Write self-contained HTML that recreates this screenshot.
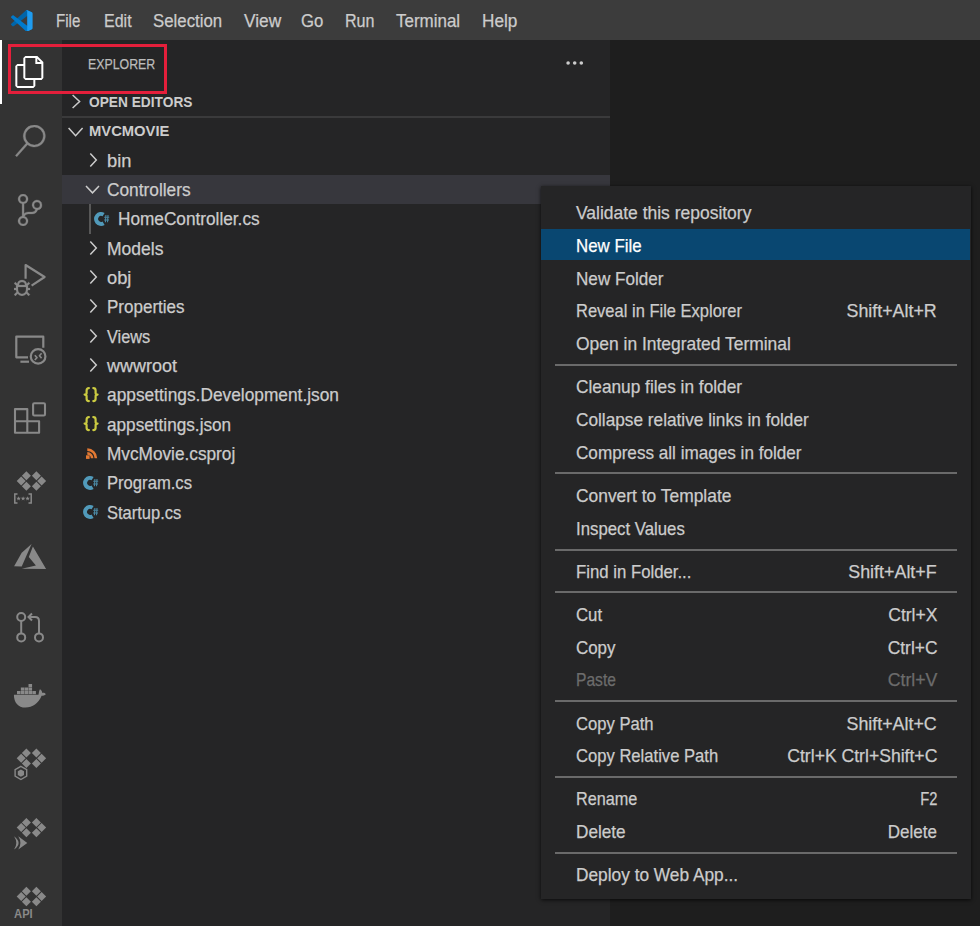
<!DOCTYPE html>
<html><head><meta charset="utf-8"><style>
html,body{margin:0;padding:0;width:980px;height:926px;overflow:hidden;background:#1e1e1e}
body{position:relative;font-family:"Liberation Sans",sans-serif}
.r{position:absolute;box-sizing:content-box}
.t{position:absolute;line-height:20px;white-space:pre}
svg.r{display:block}
</style></head><body>
<div class="r" style="left:0px;top:0px;width:980px;height:40px;background:#3c3c3c;"></div>
<div class="r" style="left:0px;top:40px;width:62px;height:886px;background:#333333;"></div>
<div class="r" style="left:62px;top:40px;width:548px;height:886px;background:#252526;"></div>
<div class="r" style="left:610px;top:40px;width:370px;height:886px;background:#1e1e1e;"></div>
<svg class="r" style="left:11.4px;top:9.5px;" width="21.6" height="21.6" viewBox="0 0 100 100"><path fill="#0065A9" d="M96.46 10.8L75.86.87C73.48-.28 70.63.2 68.76 2.07L1.33 63.55c-1.81 1.66-1.81 4.52.01 6.17l5.51 5.01c1.49 1.35 3.72 1.45 5.32.24L93.4 13.35c2.72-2.07 6.6-.12 6.6 3.3v-.24c0-2.4-1.37-4.59-3.54-5.61z"/>
<path fill="#007ACC" d="M96.46 89.2l-20.6 9.93c-2.38 1.15-5.23.67-7.1-1.2L1.33 36.45c-1.81-1.66-1.81-4.52.01-6.17l5.51-5.01c1.49-1.35 3.72-1.45 5.32-.24L93.4 86.65c2.72 2.07 6.6.12 6.6-3.3v.24c0 2.4-1.37 4.59-3.54 5.61z"/>
<path fill="#1F9CF0" d="M75.86 99.13c-2.38 1.15-5.23.67-7.1-1.2 2.31 2.31 6.24.67 6.24-2.59V4.66c0-3.26-3.93-4.9-6.24-2.59 1.87-1.87 4.72-2.35 7.1-1.2l20.6 9.92c2.17 1.04 3.54 3.23 3.54 5.63v67.17c0 2.4-1.37 4.59-3.54 5.63z"/></svg>
<div class="t" style="left:56.300000000000004px;transform-origin:0 0;top:11.08px;font-size:18.23px;color:#cccccc;font-weight:normal;transform:scaleX(0.8279);-webkit-text-stroke:0.25px #cccccc;">File</div>
<div class="t" style="left:103.5px;transform-origin:0 0;top:11.08px;font-size:18.23px;color:#cccccc;font-weight:normal;transform:scaleX(0.8797);-webkit-text-stroke:0.25px #cccccc;">Edit</div>
<div class="t" style="left:153.2px;transform-origin:0 0;top:11.08px;font-size:18.23px;color:#cccccc;font-weight:normal;transform:scaleX(0.9233);-webkit-text-stroke:0.25px #cccccc;">Selection</div>
<div class="t" style="left:243.7px;transform-origin:0 0;top:11.08px;font-size:18.23px;color:#cccccc;font-weight:normal;transform:scaleX(0.9489);-webkit-text-stroke:0.25px #cccccc;">View</div>
<div class="t" style="left:301.2px;transform-origin:0 0;top:11.08px;font-size:18.23px;color:#cccccc;font-weight:normal;transform:scaleX(0.9174);-webkit-text-stroke:0.25px #cccccc;">Go</div>
<div class="t" style="left:345.3px;transform-origin:0 0;top:11.08px;font-size:18.23px;color:#cccccc;font-weight:normal;transform:scaleX(0.8834);-webkit-text-stroke:0.25px #cccccc;">Run</div>
<div class="t" style="left:396.3px;transform-origin:0 0;top:11.08px;font-size:18.23px;color:#cccccc;font-weight:normal;transform:scaleX(0.9307);-webkit-text-stroke:0.25px #cccccc;">Terminal</div>
<div class="t" style="left:482.3px;transform-origin:0 0;top:11.08px;font-size:18.23px;color:#cccccc;font-weight:normal;transform:scaleX(0.9435);-webkit-text-stroke:0.25px #cccccc;">Help</div>
<div class="r" style="left:0px;top:40px;width:1.5px;height:64px;background:#ffffff;"></div>
<svg class="r" style="left:13.7px;top:55.9px;" width="32" height="32" viewBox="0 0 24 24"><path fill="#ffffff" d="M17.5 0h-9L7 1.5V6H2.5L1 7.5v15.07L2.5 24h12.07L16 22.57V18h4.7l1.3-1.43V4.5L17.5 0zm0 2.12l2.38 2.38H17.5V2.12zm-3 20.38h-12v-15H7v9.07L8.5 18h6v4.5zm6-6h-12v-15H16V6h4.5v10.5z"/></svg>
<svg class="r" style="left:14.2px;top:124.72999999999999px;" width="32" height="32" viewBox="0 0 24 24"><path fill="#898989" stroke="#898989" stroke-width="0.25" d="M15.25 0a8.25 8.25 0 0 0-6.18 13.72L1 22.88l1.12 1 8.05-9.12A8.251 8.251 0 1 0 15.25.01V0zm0 15a6.75 6.75 0 1 1 0-13.5 6.75 6.75 0 0 1 0 13.5z"/></svg>
<svg class="r" style="left:14.3px;top:193.76px;" width="32" height="32" viewBox="0 0 24 24"><path fill="#898989" stroke="#898989" stroke-width="0.2" d="M21.007 8.222A3.738 3.738 0 0 0 15.045 5.2a3.737 3.737 0 0 0 1.156 6.583 2.988 2.988 0 0 1-2.668 1.67h-2.99a4.456 4.456 0 0 0-2.989 1.165V7.4a3.737 3.737 0 1 0-1.494 0v9.117a3.776 3.776 0 1 0 1.816.099 2.99 2.99 0 0 1 2.668-1.667h2.99a4.484 4.484 0 0 0 4.223-3.039 3.736 3.736 0 0 0 3.25-3.687zM4.565 3.738a2.242 2.242 0 1 1 4.484 0 2.242 2.242 0 0 1-4.484 0zm4.484 16.441a2.242 2.242 0 1 1-4.484 0 2.242 2.242 0 0 1 4.484 0zm8.221-9.715a2.242 2.242 0 1 1 0-4.485 2.242 2.242 0 0 1 0 4.485z"/></svg>
<svg class="r" style="left:14px;top:263.89px;" width="32" height="32" viewBox="0 0 24 24"><path fill="#898989" stroke="#898989" stroke-width="0.15" d="M10.94 13.5l-1.32 1.32a3.73 3.73 0 0 0-7.24 0L1.06 13.5 0 14.56l1.72 1.72-.22.22V18H0v1.5h1.5v.08c.077.489.214.966.41 1.42L0 22.94 1.06 24l1.65-1.65A4.308 4.308 0 0 0 6 24a4.31 4.31 0 0 0 3.29-1.65L10.94 24 12 22.94 10.09 21c.198-.464.336-.951.41-1.45v-.1H12V18h-1.5v-1.5l-.22-.22L12 14.56l-1.06-1.06zM6 13.5a2.25 2.25 0 0 1 2.25 2.25h-4.5A2.25 2.25 0 0 1 6 13.5zm3 6a3.33 3.33 0 0 1-3 3 3.33 3.33 0 0 1-3-3v-2.25h6v2.25z"/></svg>
<svg class="r" style="left:0px;top:255px;" width="62" height="40" viewBox="0 255 62 40"><path d="M25.6 278.8 V265 L44.6 277 L31.6 285.6" fill="none" stroke="#898989" stroke-width="2.2" stroke-linejoin="round"/></svg>
<svg class="r" style="left:0px;top:320px;" width="62" height="50" viewBox="0 320 62 50"><g fill="none" stroke="#898989" stroke-width="2.2" stroke-linejoin="round">
<path d="M28 357.3 H16.3 V336.7 H43.3 V347.7"/>
<path d="M20.4 361.7 H29"/>
<circle cx="38.1" cy="356.4" r="7.3"/>
<path d="M34.8 355.2 L37 357.6 L34.8 360" stroke-width="1.6"/>
<path d="M41.6 353.3 L39.4 355.7 L41.6 358.1" stroke-width="1.6"/>
</g></svg>
<svg class="r" style="left:0px;top:395px;" width="62" height="45" viewBox="0 395 62 45"><g fill="none" stroke="#898989" stroke-width="2.1" stroke-linejoin="round">
<path d="M15 409.1 H27.3 V421.3 H39.1 V432.8 H15 Z"/>
<path d="M15 421.3 H27.3 V432.8"/>
<rect x="33.1" y="403.2" width="11.9" height="12.3" rx="1.2"/>
</g></svg>
<svg class="r" style="left:0px;top:460px;" width="62" height="50" viewBox="0 460 62 50"><g fill="#898989"><path d="M26.4 471.3 L30.9 475.8 L26.4 480.3 L21.9 475.8 Z"/><path d="M21.2 476.5 L25.7 481.0 L21.2 485.5 L16.7 481.0 Z"/><path d="M26.4 481.7 L30.9 486.2 L26.4 490.7 L21.9 486.2 Z"/><path d="M36.4 471.3 L40.9 475.8 L36.4 480.3 L31.9 475.8 Z"/><path d="M41.6 476.5 L46.1 481.0 L41.6 485.5 L37.1 481.0 Z"/><path d="M36.4 481.7 L40.9 486.2 L36.4 490.7 L31.9 486.2 Z"/></g><g fill="none" stroke="#898989" stroke-width="1.5"><path d="M17.5 494 H14.8 V503 H17.5"/><path d="M28.5 494 H31.2 V503 H28.5"/></g>
<g fill="#898989"><path d="M18.60 496.20 L19.19 497.79 L20.88 497.86 L19.55 498.91 L20.01 500.54 L18.60 499.60 L17.19 500.54 L17.65 498.91 L16.32 497.86 L18.01 497.79 Z"/><path d="M23.10 496.20 L23.69 497.79 L25.38 497.86 L24.05 498.91 L24.51 500.54 L23.10 499.60 L21.69 500.54 L22.15 498.91 L20.82 497.86 L22.51 497.79 Z"/><path d="M27.60 496.20 L28.19 497.79 L29.88 497.86 L28.55 498.91 L29.01 500.54 L27.60 499.60 L26.19 500.54 L26.65 498.91 L25.32 497.86 L27.01 497.79 Z"/></g></svg>
<svg class="r" style="left:0px;top:535px;" width="62" height="40" viewBox="0 535 62 40"><g fill="#898989"><path d="M14.1 566.3 L21.7 552.7 L31.6 544 L21.7 566.5 Z"/>
<path d="M32.9 546.4 L46.1 568.9 L21.7 568.7 L35.9 565.6 L28.8 557 Z"/></g></svg>
<svg class="r" style="left:0px;top:600px;" width="62" height="50" viewBox="0 600 62 50"><g fill="none" stroke="#898989" stroke-width="2">
<circle cx="21.2" cy="617" r="4"/><circle cx="21.2" cy="637.4" r="4"/><circle cx="39" cy="637.4" r="4"/>
<path d="M21.2 621 V633.4"/>
<path d="M39 633.4 V621 Q39 617 35 617 H29"/>
<path d="M32 613.5 L28.5 617 L32 620.5"/>
</g></svg>
<svg class="r" style="left:0px;top:675px;" width="62" height="40" viewBox="0 675 62 40"><g fill="#898989">
<path d="M13.9 694.7 H38.5 C39 692 39.3 690 40 689.2 C41.5 690.2 42.3 691.8 42.2 693.0 C43.5 692.6 45 693 45.8 694.2 C44.8 695.3 43.2 695.8 41.6 695.8 C38.5 703.5 32.5 707.6 25.5 707.6 C18 707.6 13.9 702.5 13.9 694.7 Z"/>
<rect x="17.00" y="691.0" width="3.55" height="3.2"/><rect x="20.84" y="691.0" width="3.55" height="3.2"/><rect x="24.68" y="691.0" width="3.55" height="3.2"/><rect x="28.52" y="691.0" width="3.55" height="3.2"/><rect x="32.36" y="691.0" width="3.55" height="3.2"/><rect x="20.84" y="687.5" width="3.55" height="3.2"/><rect x="24.68" y="687.5" width="3.55" height="3.2"/><rect x="28.52" y="687.5" width="3.55" height="3.2"/><rect x="28.52" y="684.0" width="3.55" height="3.2"/>
</g></svg>
<svg class="r" style="left:0px;top:740px;" width="62" height="45" viewBox="0 740 62 45"><g fill="#898989"><path d="M26.4 748.5 L30.9 753 L26.4 757.5 L21.9 753 Z"/><path d="M21.2 753.7 L25.7 758.2 L21.2 762.7 L16.7 758.2 Z"/><path d="M26.4 758.9 L30.9 763.4 L26.4 767.9 L21.9 763.4 Z"/><path d="M36.4 748.5 L40.9 753 L36.4 757.5 L31.9 753 Z"/><path d="M41.6 753.7 L46.1 758.2 L41.6 762.7 L37.1 758.2 Z"/><path d="M36.4 758.9 L40.9 763.4 L36.4 767.9 L31.9 763.4 Z"/></g><g fill="none" stroke="#898989" stroke-width="1.4"><path d="M20.9 766.3 L26.7 769.6 V776.2 L20.9 779.5 L15.1 776.2 V769.6 Z"/></g>
<path fill="#898989" d="M20.9 769.5 L24 771.3 V775 L20.9 776.8 L17.8 775 V771.3 Z"/></svg>
<svg class="r" style="left:0px;top:810px;" width="62" height="45" viewBox="0 810 62 45"><g fill="#898989"><path d="M26.4 817.9 L30.9 822.4 L26.4 826.9 L21.9 822.4 Z"/><path d="M21.2 823.1 L25.7 827.6 L21.2 832.1 L16.7 827.6 Z"/><path d="M26.4 828.3 L30.9 832.8 L26.4 837.3 L21.9 832.8 Z"/><path d="M36.4 817.9 L40.9 822.4 L36.4 826.9 L31.9 822.4 Z"/><path d="M41.6 823.1 L46.1 827.6 L41.6 832.1 L37.1 827.6 Z"/><path d="M36.4 828.3 L40.9 832.8 L36.4 837.3 L31.9 832.8 Z"/></g><g fill="#898989"><path d="M14.1 836.2 Q18.6 839.5 18.6 843.1 Q18.6 846.5 14.1 849.6 Q16.3 846.5 16.3 843.1 Q16.3 839.5 14.1 836.2 Z"/><path d="M18.3 836.2 L27.3 843.1 L18.3 849.6 Q20.4 846.5 20.4 843.1 Q20.4 839.5 18.3 836.2 Z"/></g></svg>
<svg class="r" style="left:0px;top:880px;" width="62" height="46" viewBox="0 880 62 46"><g fill="#898989"><path d="M26.4 886.8 L30.9 891.3 L26.4 895.8 L21.9 891.3 Z"/><path d="M21.2 892.0 L25.7 896.5 L21.2 901.0 L16.7 896.5 Z"/><path d="M26.4 897.1999999999999 L30.9 901.6999999999999 L26.4 906.1999999999999 L21.9 901.6999999999999 Z"/><path d="M36.4 886.8 L40.9 891.3 L36.4 895.8 L31.9 891.3 Z"/><path d="M41.6 892.0 L46.1 896.5 L41.6 901.0 L37.1 896.5 Z"/><path d="M36.4 897.1999999999999 L40.9 901.6999999999999 L36.4 906.1999999999999 L31.9 901.6999999999999 Z"/></g><text x="14.1" y="918.2" font-size="12.3" font-weight="bold" fill="#898989" font-family="Liberation Sans" textLength="18.6" lengthAdjust="spacingAndGlyphs">API</text></svg>
<div class="r" style="left:8px;top:44px;width:153px;height:44px;border:3px solid #e41f3b"></div>
<div class="t" style="left:88.2px;transform-origin:0 0;top:54.16px;font-size:14.84px;color:#bbbbbb;font-weight:normal;transform:scaleX(0.8331);-webkit-text-stroke:0.25px #bbbbbb;">EXPLORER</div>
<svg class="r" style="left:563px;top:58px;" width="24" height="10" viewBox="0 0 24 10"><g fill="#cccccc"><circle cx="5.1" cy="5" r="1.8"/><circle cx="11.7" cy="5" r="1.8"/><circle cx="18.3" cy="5" r="1.8"/></g></svg>
<svg class="r" style="left:68px;top:92px;" width="16" height="18" viewBox="0 0 16 18"><path d="M4.6 3 L11.6 9.5 L4.6 16" fill="none" stroke="#cccccc" stroke-width="1.5"/></svg>
<div class="t" style="left:88.5px;transform-origin:0 0;top:92.32px;font-size:14.95px;color:#cccccc;font-weight:bold;transform:scaleX(0.9188);">OPEN EDITORS</div>
<div class="r" style="left:62px;top:116px;width:548px;height:2px;background:#3a3a3b;"></div>
<svg class="r" style="left:66px;top:124px;" width="20" height="16" viewBox="0 0 20 16"><path d="M2.6 3.9 L9.6 11.7 L16.6 3.9" fill="none" stroke="#cccccc" stroke-width="1.5"/></svg>
<div class="t" style="left:88.5px;transform-origin:0 0;top:121.22px;font-size:14.95px;color:#cccccc;font-weight:bold;transform:scaleX(0.9880);">MVCMOVIE</div>
<div class="r" style="left:62px;top:175px;width:548px;height:29.33px;background:#37373d;"></div>
<svg class="r" style="left:86px;top:150.67px;" width="16" height="20" viewBox="0 0 16 20"><path d="M4.3 2.5 L10.3 9 L4.3 15.5" fill="none" stroke="#cccccc" stroke-width="1.5"/></svg>
<div class="t" style="left:107.2px;transform-origin:0 0;top:150.68px;font-size:18.23px;color:#cccccc;font-weight:normal;transform:scaleX(1.0038);-webkit-text-stroke:0.25px #cccccc;">bin</div>
<svg class="r" style="left:84px;top:183.0px;" width="18" height="14" viewBox="0 0 18 14"><path d="M2 3 L8.5 9.8 L15 3" fill="none" stroke="#cccccc" stroke-width="1.5"/></svg>
<div class="t" style="left:107.2px;transform-origin:0 0;top:180.01px;font-size:18.23px;color:#cccccc;font-weight:normal;transform:scaleX(0.9497);-webkit-text-stroke:0.25px #cccccc;">Controllers</div>
<div class="r" style="left:89px;top:204.32999999999998px;width:1.5px;height:29.33px;background:#585858;"></div>
<svg class="r" style="left:94.2px;top:205.82999999999998px;" width="18" height="26" viewBox="0 0 18 26"><path d="M9.6 8.6 A5 5 0 1 0 9.6 17.2" fill="none" stroke="#519aba" stroke-width="4"/>
<g stroke="#519aba" stroke-width="1.1" fill="none" opacity="0.85">
<path d="M11.9 9.0 L11.4 16.2 M14.0 9.0 L13.5 16.2 M10.2 11.2 H15.2 M10.1 14.0 H15.0"/>
</g></svg>
<div class="t" style="left:117.9px;transform-origin:0 0;top:209.34px;font-size:18.23px;color:#cccccc;font-weight:normal;transform:scaleX(0.9450);-webkit-text-stroke:0.25px #cccccc;">HomeController.cs</div>
<svg class="r" style="left:86px;top:238.65999999999997px;" width="16" height="20" viewBox="0 0 16 20"><path d="M4.3 2.5 L10.3 9 L4.3 15.5" fill="none" stroke="#cccccc" stroke-width="1.5"/></svg>
<div class="t" style="left:107.2px;transform-origin:0 0;top:238.67px;font-size:18.23px;color:#cccccc;font-weight:normal;transform:scaleX(0.9610);-webkit-text-stroke:0.25px #cccccc;">Models</div>
<svg class="r" style="left:86px;top:267.99px;" width="16" height="20" viewBox="0 0 16 20"><path d="M4.3 2.5 L10.3 9 L4.3 15.5" fill="none" stroke="#cccccc" stroke-width="1.5"/></svg>
<div class="t" style="left:107.2px;transform-origin:0 0;top:268.00px;font-size:18.23px;color:#cccccc;font-weight:normal;transform:scaleX(1.0038);-webkit-text-stroke:0.25px #cccccc;">obj</div>
<svg class="r" style="left:86px;top:297.31999999999994px;" width="16" height="20" viewBox="0 0 16 20"><path d="M4.3 2.5 L10.3 9 L4.3 15.5" fill="none" stroke="#cccccc" stroke-width="1.5"/></svg>
<div class="t" style="left:107.2px;transform-origin:0 0;top:297.33px;font-size:18.23px;color:#cccccc;font-weight:normal;transform:scaleX(0.9337);-webkit-text-stroke:0.25px #cccccc;">Properties</div>
<svg class="r" style="left:86px;top:326.65px;" width="16" height="20" viewBox="0 0 16 20"><path d="M4.3 2.5 L10.3 9 L4.3 15.5" fill="none" stroke="#cccccc" stroke-width="1.5"/></svg>
<div class="t" style="left:107.2px;transform-origin:0 0;top:326.66px;font-size:18.23px;color:#cccccc;font-weight:normal;transform:scaleX(0.8967);-webkit-text-stroke:0.25px #cccccc;">Views</div>
<svg class="r" style="left:86px;top:355.98px;" width="16" height="20" viewBox="0 0 16 20"><path d="M4.3 2.5 L10.3 9 L4.3 15.5" fill="none" stroke="#cccccc" stroke-width="1.5"/></svg>
<div class="t" style="left:107.2px;transform-origin:0 0;top:355.99px;font-size:18.23px;color:#cccccc;font-weight:normal;transform:scaleX(0.9864);-webkit-text-stroke:0.25px #cccccc;">wwwroot</div>
<svg class="r" style="left:82.5px;top:386.80999999999995px;" width="18" height="18" viewBox="0 0 18 18"><g fill="none" stroke="#cbcb41" stroke-width="2.2" stroke-linecap="round" stroke-linejoin="round">
<path d="M5.9 1.1 Q3.6 1.1 3.6 3.4 V5.9 Q3.6 7.6 1.6 7.6 Q3.6 7.6 3.6 9.3 V11.8 Q3.6 14.1 5.9 14.1"/>
<path d="M10.3 1.1 Q12.6 1.1 12.6 3.4 V5.9 Q12.6 7.6 14.6 7.6 Q12.6 7.6 12.6 9.3 V11.8 Q12.6 14.1 10.3 14.1"/>
</g></svg>
<div class="t" style="left:107.0px;transform-origin:0 0;top:385.32px;font-size:18.23px;color:#cccccc;font-weight:normal;transform:scaleX(0.9505);-webkit-text-stroke:0.25px #cccccc;">appsettings.Development.json</div>
<svg class="r" style="left:82.5px;top:416.14px;" width="18" height="18" viewBox="0 0 18 18"><g fill="none" stroke="#cbcb41" stroke-width="2.2" stroke-linecap="round" stroke-linejoin="round">
<path d="M5.9 1.1 Q3.6 1.1 3.6 3.4 V5.9 Q3.6 7.6 1.6 7.6 Q3.6 7.6 3.6 9.3 V11.8 Q3.6 14.1 5.9 14.1"/>
<path d="M10.3 1.1 Q12.6 1.1 12.6 3.4 V5.9 Q12.6 7.6 14.6 7.6 Q12.6 7.6 12.6 9.3 V11.8 Q12.6 14.1 10.3 14.1"/>
</g></svg>
<div class="t" style="left:107.0px;transform-origin:0 0;top:414.65px;font-size:18.23px;color:#cccccc;font-weight:normal;transform:scaleX(0.9428);-webkit-text-stroke:0.25px #cccccc;">appsettings.json</div>
<svg class="r" style="left:85.8px;top:446.9699999999999px;" width="14" height="14" viewBox="0 0 14 14"><g fill="none" stroke="#e37933" stroke-width="2.6">
<path d="M1.3 2.6 A8.6 8.6 0 0 1 9.9 11.2"/>
<path d="M1.3 6.4 A4.8 4.8 0 0 1 6.1 11.2"/>
</g><rect x="0" y="8.3" width="3.6" height="3.6" fill="#e37933"/></svg>
<div class="t" style="left:107.0px;transform-origin:0 0;top:443.98px;font-size:18.23px;color:#cccccc;font-weight:normal;transform:scaleX(0.9454);-webkit-text-stroke:0.25px #cccccc;">MvcMovie.csproj</div>
<svg class="r" style="left:83px;top:469.79999999999995px;" width="18" height="26" viewBox="0 0 18 26"><path d="M9.6 8.6 A5 5 0 1 0 9.6 17.2" fill="none" stroke="#519aba" stroke-width="4"/>
<g stroke="#519aba" stroke-width="1.1" fill="none" opacity="0.85">
<path d="M11.9 9.0 L11.4 16.2 M14.0 9.0 L13.5 16.2 M10.2 11.2 H15.2 M10.1 14.0 H15.0"/>
</g></svg>
<div class="t" style="left:107.0px;transform-origin:0 0;top:473.31px;font-size:18.23px;color:#cccccc;font-weight:normal;transform:scaleX(0.9122);-webkit-text-stroke:0.25px #cccccc;">Program.cs</div>
<svg class="r" style="left:83px;top:499.13px;" width="18" height="26" viewBox="0 0 18 26"><path d="M9.6 8.6 A5 5 0 1 0 9.6 17.2" fill="none" stroke="#519aba" stroke-width="4"/>
<g stroke="#519aba" stroke-width="1.1" fill="none" opacity="0.85">
<path d="M11.9 9.0 L11.4 16.2 M14.0 9.0 L13.5 16.2 M10.2 11.2 H15.2 M10.1 14.0 H15.0"/>
</g></svg>
<div class="t" style="left:107.0px;transform-origin:0 0;top:502.64px;font-size:18.23px;color:#cccccc;font-weight:normal;transform:scaleX(0.9061);-webkit-text-stroke:0.25px #cccccc;">Startup.cs</div>
<div class="r" style="left:541px;top:186px;width:430px;height:713px;background:#252526;box-shadow:0 1px 4px rgba(0,0,0,0.75)"></div>
<div class="t" style="left:575.6px;transform-origin:0 0;top:203.05px;font-size:18.34px;color:#cccccc;font-weight:normal;transform:scaleX(0.9529);-webkit-text-stroke:0.25px #cccccc;">Validate this repository</div>
<div class="r" style="left:541px;top:229.0px;width:429px;height:31px;background:#094771;"></div>
<div class="t" style="left:575.6px;transform-origin:0 0;top:235.85px;font-size:18.34px;color:#ffffff;font-weight:normal;transform:scaleX(0.9201);-webkit-text-stroke:0.25px #ffffff;">New File</div>
<div class="t" style="left:575.6px;transform-origin:0 0;top:268.65px;font-size:18.34px;color:#cccccc;font-weight:normal;transform:scaleX(0.9337);-webkit-text-stroke:0.25px #cccccc;">New Folder</div>
<div class="t" style="left:575.6px;transform-origin:0 0;top:301.45px;font-size:18.34px;color:#cccccc;font-weight:normal;transform:scaleX(0.9006);-webkit-text-stroke:0.25px #cccccc;">Reveal in File Explorer</div>
<div class="t" style="right:43px;transform-origin:100% 0;top:301.45px;font-size:18.34px;color:#cccccc;font-weight:normal;transform:scaleX(0.9730);-webkit-text-stroke:0.25px #cccccc;">Shift+Alt+R</div>
<div class="t" style="left:575.6px;transform-origin:0 0;top:334.25px;font-size:18.34px;color:#cccccc;font-weight:normal;transform:scaleX(0.9514);-webkit-text-stroke:0.25px #cccccc;">Open in Integrated Terminal</div>
<div class="r" style="left:555px;top:364px;width:402px;height:2px;background:#6a6a6a;"></div>
<div class="t" style="left:575.6px;transform-origin:0 0;top:377.30px;font-size:18.34px;color:#cccccc;font-weight:normal;transform:scaleX(0.9420);-webkit-text-stroke:0.25px #cccccc;">Cleanup files in folder</div>
<div class="t" style="left:575.6px;transform-origin:0 0;top:410.10px;font-size:18.34px;color:#cccccc;font-weight:normal;transform:scaleX(0.9402);-webkit-text-stroke:0.25px #cccccc;">Collapse relative links in folder</div>
<div class="t" style="left:575.6px;transform-origin:0 0;top:442.90px;font-size:18.34px;color:#cccccc;font-weight:normal;transform:scaleX(0.9341);-webkit-text-stroke:0.25px #cccccc;">Compress all images in folder</div>
<div class="r" style="left:555px;top:472px;width:402px;height:2px;background:#6a6a6a;"></div>
<div class="t" style="left:575.6px;transform-origin:0 0;top:485.95px;font-size:18.34px;color:#cccccc;font-weight:normal;transform:scaleX(0.9494);-webkit-text-stroke:0.25px #cccccc;">Convert to Template</div>
<div class="t" style="left:575.6px;transform-origin:0 0;top:518.75px;font-size:18.34px;color:#cccccc;font-weight:normal;transform:scaleX(0.9152);-webkit-text-stroke:0.25px #cccccc;">Inspect Values</div>
<div class="r" style="left:555px;top:549px;width:402px;height:2px;background:#6a6a6a;"></div>
<div class="t" style="left:575.6px;transform-origin:0 0;top:561.80px;font-size:18.34px;color:#cccccc;font-weight:normal;transform:scaleX(0.9137);-webkit-text-stroke:0.25px #cccccc;">Find in Folder...</div>
<div class="t" style="right:43px;transform-origin:100% 0;top:561.80px;font-size:18.34px;color:#cccccc;font-weight:normal;transform:scaleX(0.9750);-webkit-text-stroke:0.25px #cccccc;">Shift+Alt+F</div>
<div class="r" style="left:555px;top:591px;width:402px;height:2px;background:#6a6a6a;"></div>
<div class="t" style="left:575.6px;transform-origin:0 0;top:604.85px;font-size:18.34px;color:#cccccc;font-weight:normal;transform:scaleX(0.9157);-webkit-text-stroke:0.25px #cccccc;">Cut</div>
<div class="t" style="right:43px;transform-origin:100% 0;top:604.85px;font-size:18.34px;color:#cccccc;font-weight:normal;transform:scaleX(0.9570);-webkit-text-stroke:0.25px #cccccc;">Ctrl+X</div>
<div class="t" style="left:575.6px;transform-origin:0 0;top:637.65px;font-size:18.34px;color:#cccccc;font-weight:normal;transform:scaleX(0.9226);-webkit-text-stroke:0.25px #cccccc;">Copy</div>
<div class="t" style="right:43px;transform-origin:100% 0;top:637.65px;font-size:18.34px;color:#cccccc;font-weight:normal;transform:scaleX(0.9481);-webkit-text-stroke:0.25px #cccccc;">Ctrl+C</div>
<div class="t" style="left:575.6px;transform-origin:0 0;top:670.45px;font-size:18.34px;color:#6c6c6c;font-weight:normal;transform:scaleX(0.8530);-webkit-text-stroke:0.25px #6c6c6c;">Paste</div>
<div class="t" style="right:43px;transform-origin:100% 0;top:670.45px;font-size:18.34px;color:#6c6c6c;font-weight:normal;transform:scaleX(0.9668);-webkit-text-stroke:0.25px #6c6c6c;">Ctrl+V</div>
<div class="r" style="left:555px;top:700px;width:402px;height:2px;background:#6a6a6a;"></div>
<div class="t" style="left:575.6px;transform-origin:0 0;top:713.50px;font-size:18.34px;color:#cccccc;font-weight:normal;transform:scaleX(0.9061);-webkit-text-stroke:0.25px #cccccc;">Copy Path</div>
<div class="t" style="right:43px;transform-origin:100% 0;top:713.50px;font-size:18.34px;color:#cccccc;font-weight:normal;transform:scaleX(0.9730);-webkit-text-stroke:0.25px #cccccc;">Shift+Alt+C</div>
<div class="t" style="left:575.6px;transform-origin:0 0;top:746.30px;font-size:18.34px;color:#cccccc;font-weight:normal;transform:scaleX(0.9060);-webkit-text-stroke:0.25px #cccccc;">Copy Relative Path</div>
<div class="t" style="right:43px;transform-origin:100% 0;top:746.30px;font-size:18.34px;color:#cccccc;font-weight:normal;transform:scaleX(0.9599);-webkit-text-stroke:0.25px #cccccc;">Ctrl+K Ctrl+Shift+C</div>
<div class="r" style="left:555px;top:776px;width:402px;height:2px;background:#6a6a6a;"></div>
<div class="t" style="left:575.6px;transform-origin:0 0;top:789.35px;font-size:18.34px;color:#cccccc;font-weight:normal;transform:scaleX(0.8859);-webkit-text-stroke:0.25px #cccccc;">Rename</div>
<div class="t" style="right:43px;transform-origin:100% 0;top:789.35px;font-size:18.34px;color:#cccccc;font-weight:normal;transform:scaleX(0.8031);-webkit-text-stroke:0.25px #cccccc;">F2</div>
<div class="t" style="left:575.6px;transform-origin:0 0;top:822.15px;font-size:18.34px;color:#cccccc;font-weight:normal;transform:scaleX(0.9366);-webkit-text-stroke:0.25px #cccccc;">Delete</div>
<div class="t" style="right:43px;transform-origin:100% 0;top:822.15px;font-size:18.34px;color:#cccccc;font-weight:normal;transform:scaleX(0.9290);-webkit-text-stroke:0.25px #cccccc;">Delete</div>
<div class="r" style="left:555px;top:852px;width:402px;height:2px;background:#6a6a6a;"></div>
<div class="t" style="left:575.6px;transform-origin:0 0;top:865.20px;font-size:18.34px;color:#cccccc;font-weight:normal;transform:scaleX(0.9434);-webkit-text-stroke:0.25px #cccccc;">Deploy to Web App...</div>
</body></html>
